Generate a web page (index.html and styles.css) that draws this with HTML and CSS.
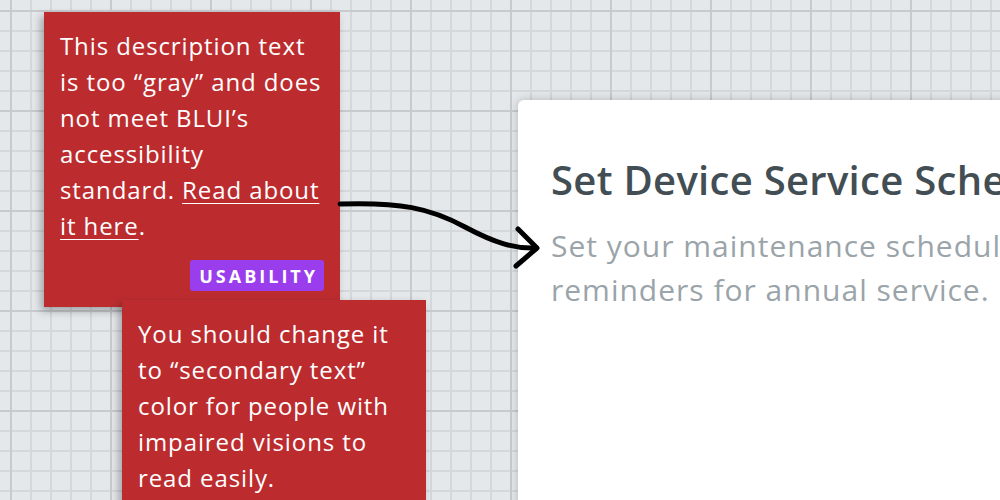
FILE: index.html
```html
<!DOCTYPE html>
<html lang="en">
<head>
<meta charset="utf-8">
<title>Review board</title>
<link rel="stylesheet" href="styles.css">
</head>
<body>
<main class="board">
  <section class="dialog">
    <h1 class="dialog-title">Set Device Service Schedule</h1>
    <p class="dialog-text">Set your maintenance schedule and get<br>reminders for annual service.</p>
  </section>

  <article class="note note-first">
    <p class="note-text">This description text is too “gray” and does not meet BLUI’s accessibility standard. <a class="note-link" href="#">Read about it here</a>.</p>
    <span class="tag">USABILITY</span>
  </article>

  <article class="note note-second">
    <p class="note-text">You should change it to “secondary text” color for people with impaired visions to read easily.</p>
  </article>

  <svg class="connector" width="1000" height="500" viewBox="0 0 1000 500" aria-hidden="true">
    <path d="M340 204 C 400 202, 430 208, 465 227 C 495 243, 515 249, 536 248" />
    <path d="M518 229 L537 248 L516 266" />
  </svg>
</main>
</body>
</html>
```

FILE: styles.css
```css
html, body {
  margin: 0;
  padding: 0;
}

body {
  width: 1000px;
  height: 500px;
  overflow: hidden;
  font-family: "Open Sans", "Noto Sans", sans-serif;
  background-color: #e5e8eb;
  background-image:
    linear-gradient(to right, #c8cbce 2px, transparent 2px),
    linear-gradient(to bottom, #c8cbce 2px, transparent 2px),
    linear-gradient(to right, #d5d8db 2px, transparent 2px),
    linear-gradient(to bottom, #d5d8db 2px, transparent 2px);
  background-size: 100px 100px, 100px 100px, 20px 20px, 20px 20px;
  background-position: 10px 10px;
}

.board {
  position: relative;
  width: 1000px;
  height: 500px;
}

/* sticky notes on the canvas */
.note {
  position: absolute;
  box-sizing: border-box;
  display: flex;
  flex-direction: column;
  padding: 16px;
  background: #bc2c2f;
  color: #ffffff;
  box-shadow: -3px 4px 8px rgba(0, 0, 0, 0.3);
}

.note-first {
  left: 44px;
  top: 12px;
  width: 296px;
  height: 295px;
  z-index: 2;
}

.note-second {
  left: 122px;
  top: 300px;
  width: 304px;
  height: 240px;
  z-index: 3;
}

.note-text {
  margin: 0;
  font-size: 24px;
  line-height: 36px;
  font-weight: 400;
  letter-spacing: 0.9px;
}

.note-link {
  color: #ffffff;
  text-decoration: underline;
  text-decoration-thickness: 1px;
  text-underline-offset: 4px;
}

.tag {
  align-self: flex-end;
  margin-top: 16px;
  height: 31px;
  box-sizing: border-box;
  padding: 0 6px 0 9px;
  display: flex;
  align-items: center;
  background: #9a3ded;
  border-radius: 3px;
  font-size: 18px;
  font-weight: 700;
  letter-spacing: 3px;
}

/* dialog being reviewed */
.dialog {
  position: absolute;
  left: 518px;
  top: 100px;
  width: 640px;
  height: 480px;
  box-sizing: border-box;
  padding: 56px 33px 0;
  background: #ffffff;
  border-radius: 6px;
  box-shadow: 0 0 10px rgba(0, 0, 0, 0.22);
  z-index: 1;
}

.dialog-title {
  margin: 0;
  font-size: 40px;
  line-height: 48px;
  font-weight: 600;
  color: #424e54;
  white-space: nowrap;
  letter-spacing: 0.3px;
}

.dialog-text {
  margin: 20px 0 0;
  font-size: 30px;
  line-height: 44px;
  color: #9aa4a9;
  white-space: nowrap;
  letter-spacing: 1px;
}

.connector {
  position: absolute;
  left: 0;
  top: 0;
  z-index: 4;
  pointer-events: none;
}

.connector path {
  fill: none;
  stroke: #000000;
  stroke-width: 5;
  stroke-linecap: round;
  stroke-linejoin: round;
}
```
